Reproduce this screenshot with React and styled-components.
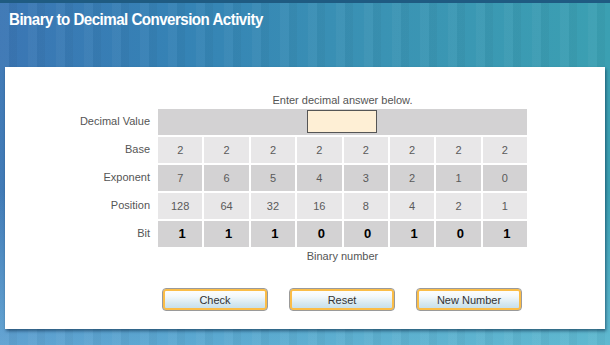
import React from 'react';
import styled, { createGlobalStyle } from 'styled-components';

const GlobalStyle = createGlobalStyle`
  html, body {
    margin: 0;
    padding: 0;
  }
  body {
    font-family: "Liberation Sans", Arial, sans-serif;
  }
`;

const Page = styled.div`
  width: 610px;
  height: 345px;
  overflow: hidden;
  box-sizing: border-box;
  border-top: 3px solid #1f5b82;
  background:
    repeating-linear-gradient(90deg, rgba(255,255,255,0.035) 0 9px, rgba(0,0,0,0.03) 9px 17px, rgba(255,255,255,0) 17px 28px),
    linear-gradient(180deg, rgba(255,255,255,0) 0%, rgba(255,255,255,0) 55%, rgba(140,215,245,0.45) 100%),
    linear-gradient(90deg, #3b76b4 0%, #3583b5 30%, #3a92b4 60%, #3ba0b2 100%);
`;

const Title = styled.h1`
  margin: 0;
  padding: 6px 0 0 9px;
  height: 59px;
  box-sizing: border-box;
  color: #ffffff;
  font-size: 17px;
  font-weight: bold;
  letter-spacing: -0.6px;
  line-height: 22px;

  span {
    display: inline-block;
    transform: scaleX(0.89);
    transform-origin: left center;
    white-space: nowrap;
  }
`;

const Panel = styled.div`
  margin: 5px 5px 0;
  height: 262px;
  background: #ffffff;
  box-shadow: 1px 2px 3px rgba(10, 40, 70, 0.6);
  padding-top: 26px;
  box-sizing: border-box;
`;

const Hint = styled.div`
  margin-left: 153px;
  width: 369px;
  text-align: center;
  font-size: 11px;
  line-height: 14px;
  color: #555;
`;

const Grid = styled.div`
  margin-top: 2px;
  display: grid;
  grid-template-columns: 151px repeat(8, 1fr);
  width: 522px;
  column-gap: 2px;
  row-gap: 2px;
  grid-auto-rows: 26px;
`;

const Label = styled.div`
  text-align: right;
  padding-right: 6px;
  font-size: 11px;
  line-height: 24px;
  color: #555;
`;

const Cell = styled.div`
  background: ${(p) => (p.$dark ? '#d3d2d3' : '#e8e7e8')};
  font-size: ${(p) => (p.$bit ? '13px' : '11px')};
  font-weight: ${(p) => (p.$bit ? 'bold' : 'normal')};
  color: ${(p) => (p.$bit ? '#000' : '#5a5a5a')};
  text-align: center;
  line-height: 26px;
  padding-left: ${(p) => (p.$bit ? '4px' : '0')};
`;

const WideCell = styled.div`
  grid-column: 2 / span 8;
  background: #d3d2d3;
  display: flex;
  justify-content: center;
  align-items: flex-start;
  padding-top: 1px;
  box-sizing: border-box;
`;

const AnswerInput = styled.input`
  width: 70px;
  height: 23px;
  box-sizing: border-box;
  border: 1px solid #555;
  background: #feefd5;
  padding: 0;
  margin: 0 0 0 -2px;
  outline: none;
`;

const Caption = styled.div`
  margin-left: 153px;
  width: 369px;
  text-align: center;
  font-size: 11px;
  line-height: 14px;
  color: #555;
  margin-top: 2px;
`;

const ButtonRow = styled.div`
  display: flex;
  gap: 21px;
  padding-left: 157px;
  margin-top: 25px;
`;

const Button = styled.button`
  width: 106px;
  height: 23px;
  box-sizing: border-box;
  border: 1px solid #9a9a9a;
  border-radius: 4px;
  box-shadow: inset 0 0 0 2px #fbbd47;
  background: linear-gradient(180deg, #ffffff 0%, #f3f8fa 35%, #d5e8f0 70%, #c2dce8 100%);
  font-family: "Liberation Sans", Arial, sans-serif;
  font-size: 11px;
  color: #333;
  padding: 0;
  cursor: pointer;
`;

const rows = [
  { label: 'Base', values: [2, 2, 2, 2, 2, 2, 2, 2], dark: false },
  { label: 'Exponent', values: [7, 6, 5, 4, 3, 2, 1, 0], dark: true },
  { label: 'Position', values: [128, 64, 32, 16, 8, 4, 2, 1], dark: false },
  { label: 'Bit', values: [1, 1, 1, 0, 0, 1, 0, 1], dark: true, bit: true },
];

export default function App() {
  return (
    <Page>
      <GlobalStyle />
      <Title><span>Binary to Decimal Conversion Activity</span></Title>
      <Panel>
        <Hint>Enter decimal answer below.</Hint>
        <Grid>
          <Label>Decimal Value</Label>
          <WideCell>
            <AnswerInput type="text" />
          </WideCell>
          {rows.map((row) => (
            <React.Fragment key={row.label}>
              <Label>{row.label}</Label>
              {row.values.map((v, i) => (
                <Cell key={`${row.label}-${i}`} $dark={row.dark} $bit={row.bit}>
                  {v}
                </Cell>
              ))}
            </React.Fragment>
          ))}
        </Grid>
        <Caption>Binary number</Caption>
        <ButtonRow>
          <Button>Check</Button>
          <Button>Reset</Button>
          <Button>New Number</Button>
        </ButtonRow>
      </Panel>
    </Page>
  );
}
